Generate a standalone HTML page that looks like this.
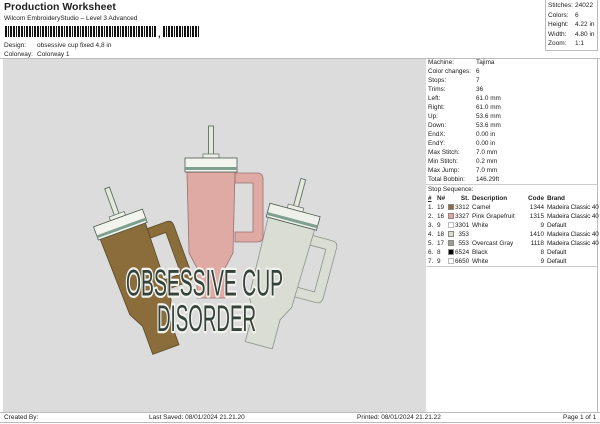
<!DOCTYPE html>
<html><head><meta charset="utf-8"><style>
*{margin:0;padding:0;box-sizing:border-box}
body{width:600px;height:424px;background:#fff;font-family:"Liberation Sans",sans-serif;color:#222;position:relative;overflow:hidden}
.a{position:absolute;white-space:nowrap;font-size:6.5px;line-height:9px}
.t{font-size:10.5px;font-weight:bold;left:4px;top:1px;line-height:12px}
.bc{position:absolute;top:26px;height:11px;background:repeating-linear-gradient(90deg,#111 0 2px,#fff 2px 3px,#111 3px 4px,#fff 4px 5px,#111 5px 6px,#111 6px 7px,#fff 7px 8px)}
.r{position:absolute;left:428px;font-size:6.4px;line-height:9px;white-space:nowrap}
.r span{position:absolute;left:48px}
.r i{position:absolute;font-style:normal}
.sw{width:6px;height:6px;border:1px solid #888;top:1px;left:20px}
.c1{left:9px}.c2{left:27px;width:14px;text-align:right}.c3{left:44px}.c4{left:94px;width:22px;text-align:right}.c5{left:119px;letter-spacing:-0.15px}
</style></head><body>
<div class="a t">Production Worksheet</div>
<div class="a" style="left:4px;top:14px">Wilcom EmbroideryStudio – Level 3 Advanced</div>
<div class="bc" style="left:5px;width:152px"></div>
<div class="a" style="left:158px;top:30px;font-weight:bold;font-size:9px">,</div>
<div class="bc" style="left:163px;width:37px"></div>
<div class="a" style="left:4px;top:41px">Design:</div><div class="a" style="left:37px;top:41px">obsessive cup fixed 4,8 in</div>
<div class="a" style="left:4px;top:50px">Colorway:</div><div class="a" style="left:37px;top:50px">Colorway 1</div>
<div style="position:absolute;left:545px;top:0;width:53px;height:51px;border:1px solid #bbb;border-top:none"></div>
<div class="a" style="left:548px;top:1px;line-height:9.5px">Stitches:<br>Colors:<br>Height:<br>Width:<br>Zoom:</div>
<div class="a" style="left:575px;top:1px;line-height:9.5px">24022<br>6<br>4.22 in<br>4.80 in<br>1:1</div>
<div style="position:absolute;left:0;top:58px;width:600px;height:1px;background:#bbb"></div>
<div style="position:absolute;left:3px;top:59px;width:423px;height:353px;background:#dcdcdc"></div>
<div style="position:absolute;left:597px;top:59px;width:1px;height:353px;background:#bbb"></div>
<div class="r" style="top:58px">Machine:<span>Tajima</span></div>
<div class="r" style="top:67px">Color changes:<span>6</span></div>
<div class="r" style="top:76px">Stops:<span>7</span></div>
<div class="r" style="top:85px">Trims:<span>36</span></div>
<div class="r" style="top:94px">Left:<span>61.0 mm</span></div>
<div class="r" style="top:103px">Right:<span>61.0 mm</span></div>
<div class="r" style="top:112px">Up:<span>53.6 mm</span></div>
<div class="r" style="top:121px">Down:<span>53.6 mm</span></div>
<div class="r" style="top:130px">EndX:<span>0.00 in</span></div>
<div class="r" style="top:139px">EndY:<span>0.00 in</span></div>
<div class="r" style="top:148px">Max Stitch:<span>7.0 mm</span></div>
<div class="r" style="top:157px">Min Stitch:<span>0.2 mm</span></div>
<div class="r" style="top:166px">Max Jump:<span>7.0 mm</span></div>
<div class="r" style="top:175px">Total Bobbin:<span>146.29ft</span></div>
<div style="position:absolute;left:426px;top:184px;width:171px;height:1px;background:#ccc"></div>
<div class="r" style="top:185px">Stop Sequence:</div>
<div class="r" style="top:194px;font-weight:bold;text-decoration:underline">#<i class="c1">N#</i><i class="c2">St.</i><i class="c3">Description</i><i class="c4">Code</i><i class="c5">Brand</i></div>
<div class="r" style="top:203px">1.<i class="c1">19</i><i class="sw" style="background:#8a6d3b"></i><i class="c2">3312</i><i class="c3">Camel</i><i class="c4">1344</i><i class="c5">Madeira Classic 40</i></div>
<div class="r" style="top:212px">2.<i class="c1">16</i><i class="sw" style="background:#e8a0a0"></i><i class="c2">3327</i><i class="c3">Pink Grapefruit</i><i class="c4">1315</i><i class="c5">Madeira Classic 40</i></div>
<div class="r" style="top:221px">3.<i class="c1">9</i><i class="sw" style="background:#fff;border-color:#bbb"></i><i class="c2">3301</i><i class="c3">White</i><i class="c4">9</i><i class="c5">Default</i></div>
<div class="r" style="top:230px">4.<i class="c1">18</i><i class="sw" style="background:#dcdcd4"></i><i class="c2">353</i><i class="c4">1410</i><i class="c5">Madeira Classic 40</i></div>
<div class="r" style="top:239px">5.<i class="c1">17</i><i class="sw" style="background:#9aa098"></i><i class="c2">553</i><i class="c3">Overcast Gray</i><i class="c4">1118</i><i class="c5">Madeira Classic 40</i></div>
<div class="r" style="top:248px">6.<i class="c1">8</i><i class="sw" style="background:#000"></i><i class="c2">6524</i><i class="c3">Black</i><i class="c4">8</i><i class="c5">Default</i></div>
<div class="r" style="top:257px">7.<i class="c1">9</i><i class="sw" style="background:#fff;border-color:#bbb"></i><i class="c2">6650</i><i class="c3">White</i><i class="c4">9</i><i class="c5">Default</i></div>
<div style="position:absolute;left:426px;top:266px;width:171px;height:1px;background:#ccc"></div>
<div style="position:absolute;left:0;top:412px;width:600px;height:1px;background:#bbb"></div>
<div class="a" style="left:4px;top:413px">Created By:</div>
<div class="a" style="left:149px;top:413px">Last Saved: 08/01/2024 21.21.20</div>
<div class="a" style="left:357px;top:413px">Printed: 08/01/2024 21.21.22</div>
<div class="a" style="left:563px;top:413px">Page 1 of 1</div>
<div style="position:absolute;left:0;top:422px;width:600px;height:1px;background:#bbb"></div>

<svg style="position:absolute;left:0;top:0" width="600" height="424" viewBox="0 0 600 424">
<defs>
<g id="cupbase">
<rect x="-2.5" y="-32" width="5" height="30" fill="#e6e8dc" stroke="#6a7a70" stroke-width="1"/>
<rect x="-8" y="-4" width="16" height="4" fill="#eeeee8" stroke="#6a7a70" stroke-width="0.8"/>
</g>
</defs>
<g transform="translate(118,218) rotate(-20)">
<use href="#cupbase"/>
<path d="M22,20 L44,20 Q50,20 50,26 L50,78 Q50,84 44,84 L22,84 L22,74 L40,74 L40,30 L22,30 Z" fill="#8a6d3b" stroke="#5a4a2a" stroke-width="0.8"/>
<path d="M-24,14 L24,14 L22,95 L14,110 L14,140 L-14,140 L-14,110 L-22,95 Z" fill="#8a6d3b" stroke="#5a4a2a" stroke-width="0.8"/>
<rect x="-26" y="0" width="52" height="14" fill="#f4f4ee" stroke="#4a5a50" stroke-width="0.8"/>
<rect x="-26" y="9" width="52" height="3" fill="#7fa090"/>
</g>
<g transform="translate(295,210) rotate(15)">
<use href="#cupbase"/>
<path d="M22,20 L44,20 Q50,20 50,26 L50,78 Q50,84 44,84 L22,84 L22,74 L40,74 L40,30 L22,30 Z" fill="#d9ddd3" stroke="#8a948a" stroke-width="0.8"/>
<path d="M-24,14 L24,14 L22,95 L14,110 L14,140 L-14,140 L-14,110 L-22,95 Z" fill="#d9ddd3" stroke="#8a948a" stroke-width="0.8"/>
<rect x="-26" y="0" width="52" height="14" fill="#eef0ea" stroke="#4a5a50" stroke-width="0.8"/>
<rect x="-26" y="9" width="52" height="3" fill="#7fa090"/>
</g>
<g transform="translate(211,158)">
<use href="#cupbase"/>
<path d="M24,15 L46,15 Q52,15 52,21 L52,78 Q52,84 46,84 L24,84 L24,74 L42,74 L42,25 L24,25 Z" fill="#e0aaa4" stroke="#9a7070" stroke-width="0.8"/>
<path d="M-24,14 L24,14 L22,95 L14,110 L14,140 L-14,140 L-14,110 L-22,95 Z" fill="#e0aaa4" stroke="#9a7070" stroke-width="0.8"/>
<rect x="-26" y="0" width="52" height="14" fill="#f4f4ee" stroke="#4a5a50" stroke-width="0.8"/>
<rect x="-26" y="9" width="52" height="3" fill="#7fa090"/>
</g>
<g font-family="Liberation Sans Narrow, Liberation Sans, sans-serif" font-size="34" fill="#34423a" stroke="#f2f2ee" stroke-width="4" paint-order="stroke" stroke-linejoin="round">
<text x="126" y="296" textLength="157" lengthAdjust="spacingAndGlyphs" transform="translate(0,-30) scale(1,1.1)">OBSESSIVE CUP</text>
<text x="157" y="331" textLength="99" lengthAdjust="spacingAndGlyphs" transform="translate(0,-33) scale(1,1.1)">DISORDER</text>
</g>
</svg>
</body></html>
